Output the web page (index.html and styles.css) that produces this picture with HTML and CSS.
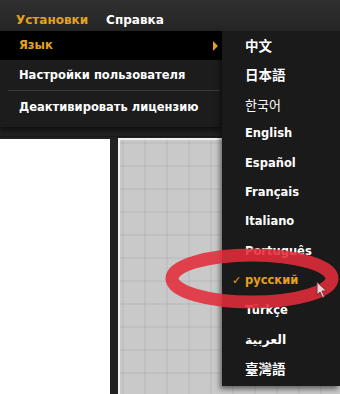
FILE: index.html
```html
<!DOCTYPE html>
<html lang="ru">
<head>
    <meta charset="UTF-8">
    <meta name="viewport" content="width=device-width, initial-scale=1.0">
    <title>Установки</title>
    <link rel="stylesheet" href="styles.css">
</head>
<body>
    <header class="menubar">
        <span class="menubar-item active">Установки</span>
        <span class="menubar-item">Справка</span>
    </header>

    <div class="workspace">
        <div class="toolbar">
            <span class="toolbar-dot"></span>
        </div>
        <div class="panels">
            <div class="panel-white"></div>
            <div class="panel-grid"></div>
        </div>
    </div>

    <!-- dropdown from "Установки" -->
    <ul class="dropdown">
        <li class="dropdown-item selected">Язык <span class="arrow"></span></li>
        <li class="dropdown-item">Настройки пользователя</li>
        <li class="dropdown-sep"></li>
        <li class="dropdown-item">Деактивировать лицензию</li>
    </ul>

    <!-- language submenu -->
    <ul class="submenu">
        <li class="sub-item cjk">中文</li>
        <li class="sub-item cjk">日本語</li>
        <li class="sub-item thin">한국어</li>
        <li class="sub-item">English</li>
        <li class="sub-item">Español</li>
        <li class="sub-item">Français</li>
        <li class="sub-item">Italiano</li>
        <li class="sub-item">Português</li>
        <li class="sub-item current"><span class="check">✓</span>русский</li>
        <li class="sub-item">Türkçe</li>
        <li class="sub-item arabic">العربية</li>
        <li class="sub-item cjk">臺灣語</li>
    </ul>

    <svg class="highlight" width="340" height="394" viewBox="0 0 340 394">
        <ellipse cx="252" cy="278.5" rx="80" ry="23.5" fill="none" stroke="rgba(226,44,58,0.88)" stroke-width="13"/>
    </svg>

    <svg class="cursor" width="12" height="18" viewBox="0 0 12 18">
        <path d="M1 1 L1 14 L4 11 L6.5 16.5 L8.5 15.5 L6 10 L10.5 10 Z" fill="#f4d4d6" stroke="#7a2a30" stroke-width="1"/>
    </svg>
</body>
</html>
```

FILE: styles.css
```css
body {
    margin: 0;
    width: 340px;
    height: 394px;
    overflow: hidden;
    position: relative;
    background-color: #1f1f1f;
    font-family: "DejaVu Sans", Verdana, sans-serif;
    font-weight: bold;
    font-size: 11.5px;
}

.menubar {
    height: 31px;
    background: linear-gradient(#2f2f2f, #262626);
    display: flex;
    align-items: flex-end;
    padding-left: 16px;
    gap: 18px;
    box-sizing: border-box;
    padding-bottom: 4px;
}

.menubar-item {
    color: #fff;
    font-size: 12px;
}

.menubar-item.active {
    color: #e5a21e;
}

.workspace {
    display: flex;
    flex-direction: column;
    height: 363px;
}

.toolbar {
    height: 105px;
    background-color: #222;
    border-bottom: 1px solid #181818;
}

.toolbar-dot {
    display: block;
    margin: 91px 0 0 212px;
    width: 8px;
    height: 3px;
    border-radius: 4px;
    background-color: #5e8a3a;
}

.panels {
    flex: 1;
    display: flex;
    gap: 8px;
    padding-top: 1px;
    background-color: #222;
}

.panel-white {
    width: 110px;
    background-color: #fff;
    margin-top: 1px;
}

.panel-grid {
    flex: 1;
    border-top: 2px solid #f2f2f2;
    border-left: 2px solid #f2f2f2;
    background-color: #c9c9c9;
    background-image:
        linear-gradient(90deg, rgba(0, 0, 0, 0.045) 2px, transparent 2px),
        linear-gradient(rgba(0, 0, 0, 0.045) 2px, transparent 2px);
    background-size: 22px 23px;
    background-position: 2px 2px;
}

.dropdown {
    position: absolute;
    top: 31px;
    left: 0;
    width: 222px;
    margin: 0;
    padding: 0 0 5px;
    list-style: none;
    background-color: #1c1c1c;
    box-shadow: 0 3px 6px rgba(0, 0, 0, 0.6);
}

.dropdown-item {
    height: 30px;
    line-height: 30px;
    padding-left: 19px;
    color: #fff;
    position: relative;
}

.dropdown-item.selected {
    background-color: #000;
    color: #e5a21e;
    height: 29px;
    line-height: 29px;
}

.arrow {
    position: absolute;
    right: 4px;
    top: 10px;
    width: 0;
    height: 0;
    border-top: 5px solid transparent;
    border-bottom: 5px solid transparent;
    border-left: 5px solid #e5a21e;
}

.dropdown-sep {
    height: 1px;
    margin: 0 2px 1px 8px;
    background-color: #3a3a3a;
}

.submenu {
    position: absolute;
    top: 31px;
    left: 222px;
    width: 118px;
    margin: 0;
    padding: 0 0 2px;
    list-style: none;
    background-color: #1a1a1a;
    box-shadow: -2px 3px 5px rgba(0, 0, 0, 0.5);
}

.sub-item {
    height: 29.4px;
    line-height: 29.4px;
    padding-left: 23px;
    color: #fff;
    position: relative;
}

.sub-item.cjk {
    font-size: 13.5px;
    font-family: "Noto Sans CJK TC", sans-serif;
}

.sub-item.thin {
    font-size: 13px;
    font-weight: normal;
    font-family: "Noto Sans CJK KR", sans-serif;
}

.sub-item.arabic {
    font-size: 12.5px;
}

.sub-item.current {
    color: #e5a21e;
}

.check {
    position: absolute;
    left: 10px;
    font-size: 11px;
}

.highlight {
    position: absolute;
    top: 0;
    left: 0;
    pointer-events: none;
}

.cursor {
    position: absolute;
    left: 316px;
    top: 281px;
}
```
